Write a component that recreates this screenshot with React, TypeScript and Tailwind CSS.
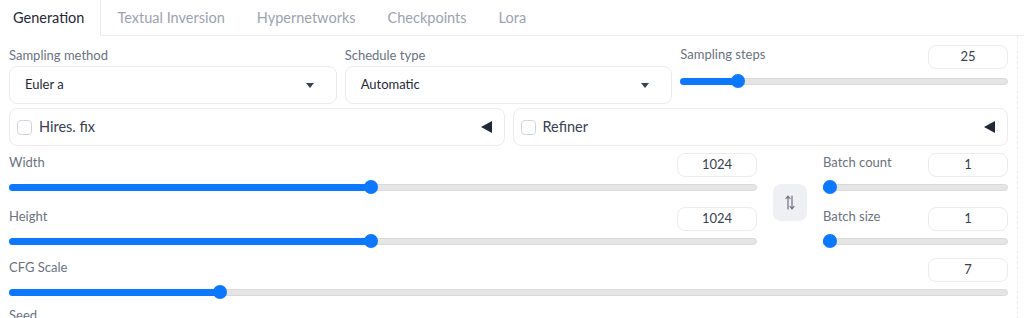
const tabs = ["Generation", "Textual Inversion", "Hypernetworks", "Checkpoints", "Lora"];

const Slider = ({ pct }: { pct: number }) => (
  <div className="relative h-[14px] flex items-center">
    <div className="w-full h-[7px] rounded-full bg-[#e5e5e5] border border-[#d9d9d9]" />
    <div
      className="absolute left-0 h-[7px] rounded-l-full bg-[#0b78ff]"
      style={{ width: `calc(7px + ${pct} * (100% - 14px))` }}
    />
    <div
      className="absolute w-[14px] h-[14px] rounded-full bg-[#0b78ff]"
      style={{ left: `calc(${pct} * (100% - 14px))` }}
    />
  </div>
);

const NumBox = ({ value }: { value: string }) => (
  <div className="w-[80px] h-[24px] rounded-[8px] border border-[#ececec] bg-white flex items-center justify-center text-[13px] text-[#374151]">
    {value}
  </div>
);

const SliderField = ({
  label,
  value,
  pct,
  gap = 3,
}: {
  label: string;
  value: string;
  pct: number;
  gap?: number;
}) => (
  <div className="flex flex-col">
    <div className="flex justify-between items-start h-[24px]">
      <span className="text-[13px] leading-[18px] text-[#6b7280]">{label}</span>
      <NumBox value={value} />
    </div>
    <div className={gap === 5 ? "mt-[5px]" : "mt-[3px]"}>
      <Slider pct={pct} />
    </div>
  </div>
);

const Dropdown = ({ label, value }: { label: string; value: string }) => (
  <div className="flex flex-col">
    <span className="text-[13px] text-[#6b7280] h-[21px] flex items-center">{label}</span>
    <div className="h-[38px] rounded-[8px] border border-[#ececec] bg-white flex items-center justify-between pl-[15px] pr-[22px] text-[13px] text-[#1f2937]">
      <span>{value}</span>
      <span className="w-0 h-0 border-l-[4px] border-r-[4px] border-t-[5px] border-l-transparent border-r-transparent border-t-[#374151]" />
    </div>
  </div>
);

const Accordion = ({ label }: { label: string }) => (
  <div className="h-[38px] rounded-[8px] border border-[#ececec] bg-white flex items-center justify-between pl-[7px] pr-[12px]">
    <div className="flex items-center gap-[7px]">
      <span className="w-[15px] h-[15px] rounded-[4px] border border-[#d1d5db] bg-white" />
      <span className="text-[14.5px] text-[#374151]">{label}</span>
    </div>
    <span className="w-0 h-0 border-t-[6px] border-b-[6px] border-r-[11px] border-t-transparent border-b-transparent border-r-[#1f2937]" />
  </div>
);

export default function App() {
  return (
    <div className="w-[1024px] h-[318px] overflow-hidden bg-white font-['Lato','Noto_Sans',sans-serif]">
      <div className="flex h-[36px] border-b border-[#ececec]">
        {tabs.map((t, i) => (
          <div
            key={t}
            className={
              i === 0
                ? "h-[36px] -mb-px bg-white border-r border-[#ececec] pl-[13px] pr-[16px] flex items-center text-[14.5px] text-[#1f2937]"
                : "h-[35px] px-[16px] flex items-center text-[14.5px] text-[#9ca3af]"
            }
          >
            {t}
          </div>
        ))}
      </div>
      <div className="w-[1018px] border-r border-dashed border-[#eeeeee] px-[9px] pt-[9px] flex flex-col">
        <div className="grid grid-cols-3 gap-[8px] w-[999px]">
          <Dropdown label="Sampling method" value="Euler a" />
          <Dropdown label="Schedule type" value="Automatic" />
          <SliderField label="Sampling steps" value="25" pct={0.16} gap={5} />
        </div>
        <div className="grid grid-cols-2 gap-[8px] w-[999px] mt-[4px]">
          <Accordion label="Hires. fix" />
          <Accordion label="Refiner" />
        </div>
        <div className="flex w-[999px] mt-[7px]">
          <div className="w-[748px] flex flex-col gap-[13px]">
            <SliderField label="Width" value="1024" pct={0.484} />
            <SliderField label="Height" value="1024" pct={0.484} />
          </div>
          <div className="w-[66px] flex justify-center pt-[31px]">
            <div className="w-[34px] h-[37px] rounded-[8px] bg-[#eef0f3] flex items-center justify-center">
              <svg width="10" height="15" viewBox="0 0 10 15" fill="none" stroke="#6b7280" strokeWidth="1.2" strokeLinecap="round" strokeLinejoin="round">
                <path d="M3 14V1M1 3.5 3 1l2 2.5" />
                <path d="M7 1v13M5 11.5 7 14l2-2.5" />
              </svg>
            </div>
          </div>
          <div className="w-[185px] flex flex-col gap-[13px]">
            <SliderField label="Batch count" value="1" pct={0} />
            <SliderField label="Batch size" value="1" pct={0} />
          </div>
        </div>
        <div className="w-[999px] mt-[10px]">
          <SliderField label="CFG Scale" value="7" pct={0.207} />
        </div>
        <div className="mt-[7px] text-[13px] leading-[18px] text-[#6b7280]">Seed</div>
      </div>
    </div>
  );
}
